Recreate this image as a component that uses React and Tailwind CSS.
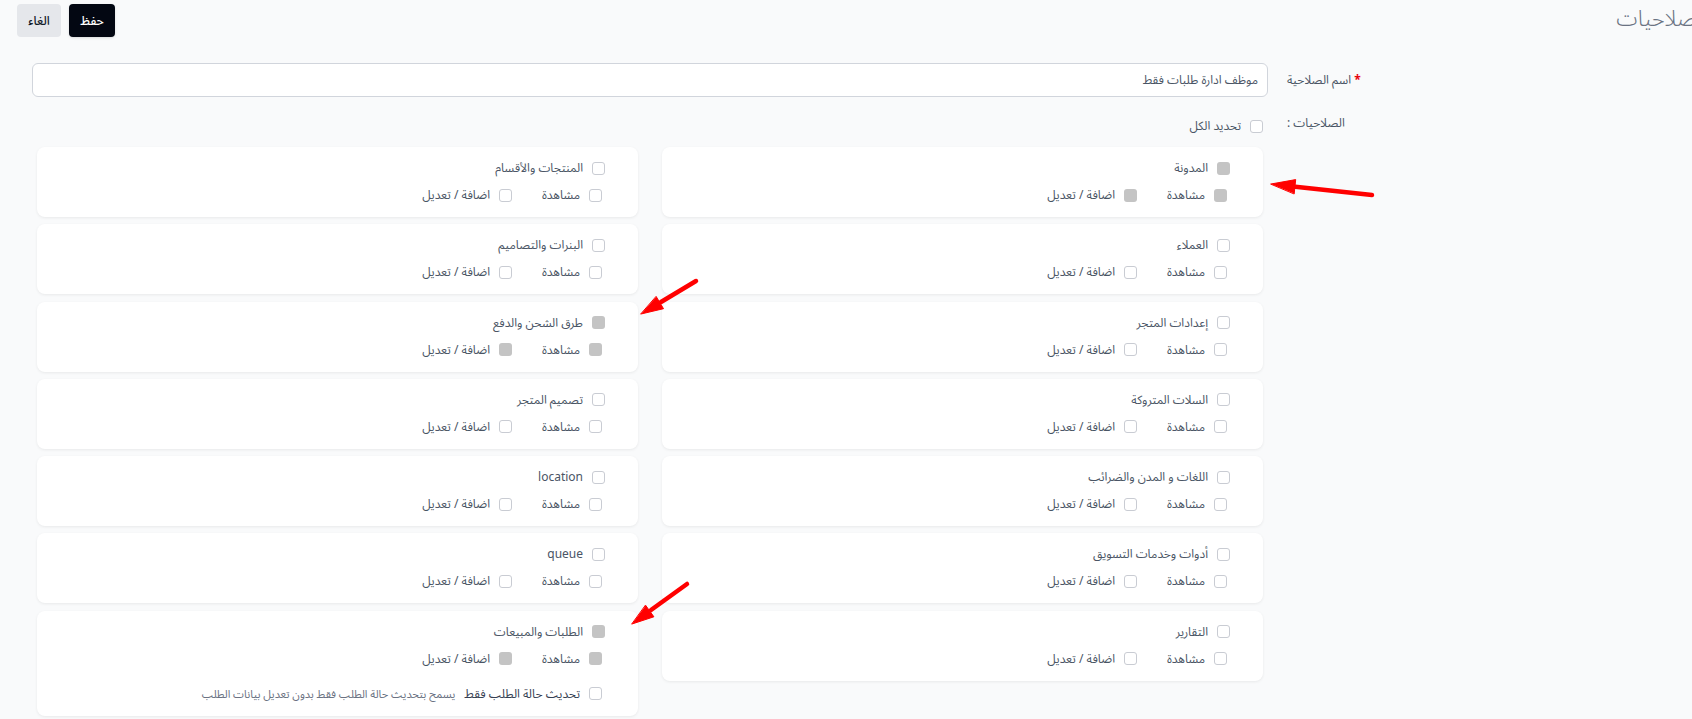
import React from "react";

//الأقسام بالترتيب (العمود الأيمن أولا)
const sections = [
  { name: "المدونة", disabled: true },
  { name: "المنتجات والأقسام" },
  { name: "العملاء" },
  { name: "البنرات والتصاميم" },
  { name: "إعدادات المتجر" },
  { name: "طرق الشحن والدفع", disabled: true },
  { name: "السلات المتروكة" },
  { name: "تصميم المتجر" },
  { name: "اللغات و المدن والضرائب" },
  { name: "location" },
  { name: "أدوات وخدمات التسويق" },
  { name: "queue" },
  { name: "التقارير" },
  { name: "الطلبات والمبيعات", disabled: true, extra: true },
];

function Box({ disabled }) {
  return disabled ? (
    <span className="block w-[13px] h-[13px] shrink-0 rounded-[3px] bg-[#c4c4c4]" />
  ) : (
    <span className="block w-[13px] h-[13px] shrink-0 rounded-[3px] border border-[#c9ccd3] bg-white" />
  );
}

function Option({ label, disabled }) {
  return (
    <div className="w-[90px] flex items-center gap-[9px]">
      <Box disabled={disabled} />
      <span className="text-[12px] text-gray-600 whitespace-nowrap">{label}</span>
    </div>
  );
}

function SectionCard({ section }) {
  return (
    <div className="bg-white rounded-lg shadow-[0_1px_3px_rgba(0,0,0,0.07)] pr-[33px] pt-[11px] pb-[12px]">
      <div className="h-[20px] flex items-center gap-[9px]">
        <Box disabled={section.disabled} />
        <span className="text-[12px] text-gray-600 whitespace-nowrap">{section.name}</span>
      </div>
      <div className="mt-[7px] mr-[3px] h-[20px] flex items-center">
        <Option label="مشاهدة" disabled={section.disabled} />
        <Option label="اضافة / تعديل" disabled={section.disabled} />
      </div>
      {section.extra && (
        <div className="mt-[15px] mr-[3px] h-[20px] flex items-center gap-[9px]">
          <Box />
          <span className="text-[12px] text-gray-700 whitespace-nowrap">تحديث حالة الطلب فقط</span>
          <span className="text-[11px] text-gray-500 whitespace-nowrap">يسمح بتحديث حالة الطلب فقط بدون تعديل بيانات الطلب</span>
        </div>
      )}
    </div>
  );
}

function Arrows() {
  return (
    <svg className="absolute left-0 top-0 pointer-events-none" width="1692" height="719">
      <g fill="#ff0000" stroke="#ff0000" strokeLinecap="round" strokeLinejoin="round">
        <line x1="1372" y1="195" x2="1293" y2="186.5" strokeWidth="4.5" />
        <polygon points="1271,184 1295.7,179.6 1294.2,193.6" strokeWidth="1" />
        <line x1="696" y1="281" x2="661" y2="302" strokeWidth="4.5" />
        <polygon points="641,314 663.5,308.7 656.3,296.7" strokeWidth="1" />
        <line x1="687" y1="584" x2="651" y2="610" strokeWidth="4.5" />
        <polygon points="632,624 653.9,616.8 645.7,605.4" strokeWidth="1" />
      </g>
    </svg>
  );
}

export default function App() {
  return (
    <div dir="rtl" className="relative min-h-screen bg-[#f9fafb] overflow-hidden font-['Noto_Sans','Noto_Sans_Arabic','DejaVu_Sans',sans-serif]">
      {/* الراس */}
      <div className="h-[37px] flex items-start justify-between pl-[17px] pt-[4px]">
        <div className="overflow-hidden">
          <h1 className="-mr-[16px] text-[22px] leading-[26px] font-light text-gray-500 whitespace-nowrap">الصلاحيات</h1>
        </div>
        <div className="flex gap-2">
          <button className="h-[33px] w-[46px] rounded bg-[#030712] text-white text-[12px] font-medium shadow-sm">حفظ</button>
          <button className="h-[33px] w-[44px] rounded bg-gray-200 text-gray-900 text-[12px] font-medium">الغاء</button>
        </div>
      </div>

      {/* الفورم */}
      <div className="mt-[26px] mr-[331px] ml-[32px]">
        <div className="flex items-center gap-[19px]">
          <div className="w-[74px] shrink-0 flex justify-end">
            <label className="text-[12px] text-gray-600 whitespace-nowrap">
              <span className="text-red-600 font-bold">*</span> اسم الصلاحية
            </label>
          </div>
          <input
            className="flex-1 h-[34px] rounded-md border border-gray-300 bg-white px-[9px] text-[12px] text-gray-600 outline-none"
            defaultValue="موظف ادارة طلبات فقط"
          />
        </div>

        <div className="mt-[19px] flex gap-[19px]">
          <div className="w-[74px] shrink-0 flex justify-end">
            <span className="text-[12px] leading-[14px] text-gray-600 whitespace-nowrap">الصلاحيات :</span>
          </div>
          <div className="flex-1 px-[5px]">
            <div className="h-[20px] flex items-center gap-[9px]">
              <Box />
              <span className="text-[12px] text-gray-600">تحديد الكل</span>
            </div>
            <div className="mt-[11px] grid grid-cols-2 gap-x-6 gap-y-[7.3px] items-start">
              {sections.map((s) => (
                <SectionCard key={s.name} section={s} />
              ))}
            </div>
          </div>
        </div>
      </div>

      <Arrows />
    </div>
  );
}
